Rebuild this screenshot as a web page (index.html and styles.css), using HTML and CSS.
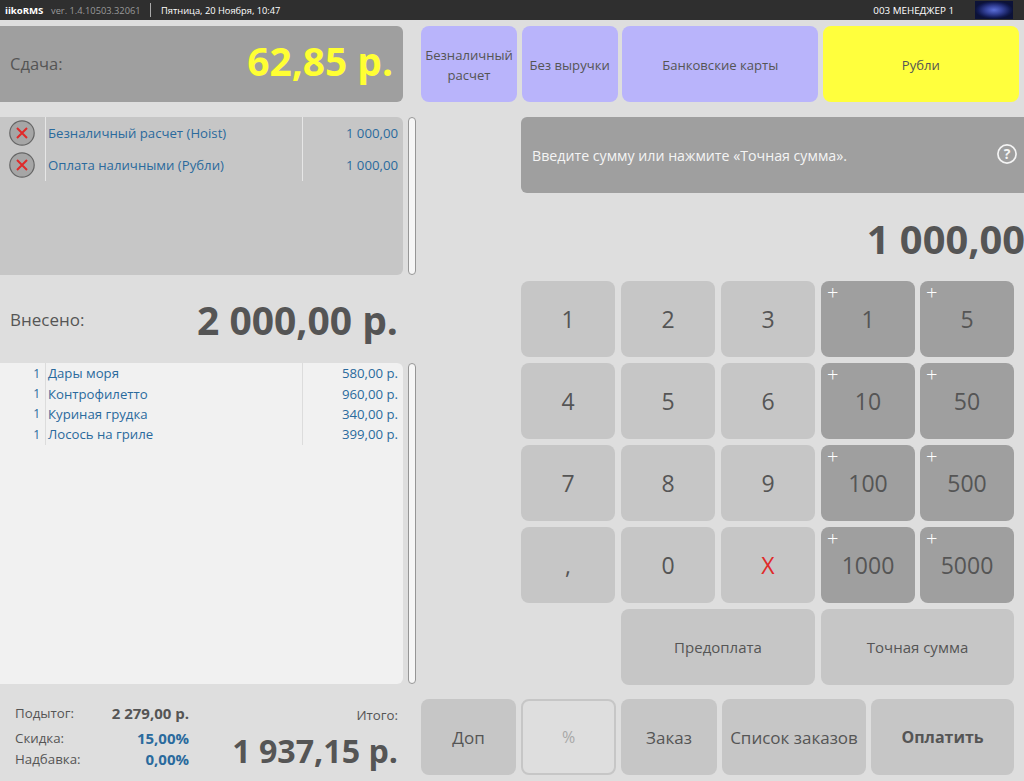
FILE: index.html
```html
<!DOCTYPE html>
<html lang="ru">
<head>
<meta charset="utf-8">
<title>iikoRMS</title>
<link rel="stylesheet" href="styles.css">
</head>
<body>
<header class="topbar">
  <span class="brand">iikoRMS</span>
  <span class="version">ver. 1.4.10503.32061</span>
  <span class="sep"></span>
  <span class="date">Пятница, 20 Ноября, 10:47</span>
  <span class="user">003 МЕНЕДЖЕР 1</span>
  <span class="logo"></span>
</header>
<main class="main">
  <section class="left">
    <div class="change">
      <span class="change-label">Сдача:</span>
      <span class="change-value">62,85 р.</span>
    </div>
    <div class="list-row paid-wrap">
      <div class="panel paid">
        <div class="line paid-line">
          <span class="cell-a"><svg class="del" viewBox="0 0 26 26"><circle cx="13" cy="13" r="12.2"/><path d="M8 8 18 18M18 8 8 18"/></svg></span>
          <span class="cell-b">Безналичный расчет (Hoist)</span>
          <span class="cell-c">1 000,00</span>
        </div>
        <div class="line paid-line">
          <span class="cell-a"><svg class="del" viewBox="0 0 26 26"><circle cx="13" cy="13" r="12.2"/><path d="M8 8 18 18M18 8 8 18"/></svg></span>
          <span class="cell-b">Оплата наличными (Рубли)</span>
          <span class="cell-c">1 000,00</span>
        </div>
      </div>
      <div class="scroll"></div>
    </div>
    <div class="paid-sum">
      <span class="paid-label">Внесено:</span>
      <span class="paid-value">2 000,00 р.</span>
    </div>
    <div class="list-row order-wrap">
      <div class="panel order">
        <div class="line order-line"><span class="cell-a qty">1</span><span class="cell-b">Дары моря</span><span class="cell-c">580,00 р.</span></div>
        <div class="line order-line"><span class="cell-a qty">1</span><span class="cell-b">Контрофилетто</span><span class="cell-c">960,00 р.</span></div>
        <div class="line order-line"><span class="cell-a qty">1</span><span class="cell-b">Куриная грудка</span><span class="cell-c">340,00 р.</span></div>
        <div class="line order-line"><span class="cell-a qty">1</span><span class="cell-b">Лосось на гриле</span><span class="cell-c">399,00 р.</span></div>
      </div>
      <div class="scroll"></div>
    </div>
    <div class="totals">
      <div class="totals-left">
        <div class="t-row t-sub"><span>Подытог:</span><b>2 279,00 р.</b></div>
        <div class="t-row t-disc"><span>Скидка:</span><b class="blue">15,00%</b></div>
        <div class="t-row"><span>Надбавка:</span><b class="blue">0,00%</b></div>
      </div>
      <div class="totals-right">
        <span class="total-label">Итого:</span>
        <span class="total-value">1 937,15 р.</span>
      </div>
    </div>
  </section>
  <section class="right">
    <div class="pay-types">
      <button class="btn lilac w96 small">Безналичный<br>расчет</button>
      <button class="btn lilac w96 small">Без выручки</button>
      <button class="btn lilac w196 small">Банковские карты</button>
      <button class="btn yellow w196 small">Рубли</button>
    </div>
    <div class="entry">
      <div class="hint">
        <span>Введите сумму или нажмите «Точная сумма».</span>
        <svg class="help" viewBox="0 0 20 20"><circle cx="10" cy="10" r="9.1"/><text x="10" y="15" text-anchor="middle">?</text></svg>
      </div>
      <div class="amount">1 000,00</div>
      <div class="keypad">
        <button class="btn key">1</button>
        <button class="btn key">2</button>
        <button class="btn key">3</button>
        <button class="btn key dark"><i class="plus">+</i>1</button>
        <button class="btn key dark"><i class="plus">+</i>5</button>
        <button class="btn key">4</button>
        <button class="btn key">5</button>
        <button class="btn key">6</button>
        <button class="btn key dark"><i class="plus">+</i>10</button>
        <button class="btn key dark"><i class="plus">+</i>50</button>
        <button class="btn key">7</button>
        <button class="btn key">8</button>
        <button class="btn key">9</button>
        <button class="btn key dark"><i class="plus">+</i>100</button>
        <button class="btn key dark"><i class="plus">+</i>500</button>
        <button class="btn key">,</button>
        <button class="btn key">0</button>
        <button class="btn key red">X</button>
        <button class="btn key dark"><i class="plus">+</i>1000</button>
        <button class="btn key dark"><i class="plus">+</i>5000</button>
        <button class="btn wide skip">Предоплата</button>
        <button class="btn wide">Точная сумма</button>
      </div>
    </div>
    <div class="actions">
      <button class="btn act w95">Доп</button>
      <button class="btn act w95 off">%</button>
      <button class="btn act w96b">Заказ</button>
      <button class="btn act w144">Список заказов</button>
      <button class="btn act w143 strong">Оплатить</button>
    </div>
  </section>
</main>
</body>
</html>
```
FILE: styles.css
```css
* { box-sizing: border-box; }
html, body { margin: 0; height: 100%; }
body {
  width: 1024px;
  height: 781px;
  overflow: hidden;
  background: #dedede;
  color: #555;
  font-family: "Open Sans", "Noto Sans", sans-serif;
}
.topbar {
  height: 20px;
  background: #2f2f2f;
  display: flex;
  align-items: center;
  font-size: 9.3px;
  color: #fff;
  padding-left: 5px;
}
.brand { font-weight: 700; width: 46px; font-size: 9.6px; }
.version { color: #999; width: 99px; }
.sep { width: 1px; height: 14px; background: #aaa; margin-right: 10px; }
.user { margin-left: auto; margin-right: 21px; font-size: 9.8px; }
.logo {
  width: 38px;
  height: 18px;
  margin-right: 11px;
  background: radial-gradient(ellipse 50% 50% at 50% 50%, #5b6fd8 0%, #34429a 45%, #111a52 85%, #0c1238 100%);
}
.main { display: flex; gap: 5px; padding-top: 6px; }
.left { width: 416px; display: flex; flex-direction: column; }
.change {
  width: 403px;
  height: 76px;
  margin-bottom: 15px;
  background: #9f9f9f;
  border-radius: 0 6px 6px 0;
  display: flex;
  justify-content: space-between;
  align-items: center;
  padding: 0 10px 5px;
}
.change-label { font-size: 16.5px; padding-top: 3px; }
.change-value { font-size: 38.9px; font-weight: 700; color: #ffff33; line-height: 1; }
.list-row { display: flex; gap: 5px; }
.paid-wrap { height: 158px; }
.order-wrap { height: 321px; }
.panel { width: 403px; border-radius: 0 6px 6px 0; }
.paid { background: #c6c6c6; }
.order { background: #f1f1f1; }
.scroll {
  width: 8px;
  background: #f6f6f6;
  border: 1px solid #969696;
  border-radius: 4px;
}
.line { display: flex; font-size: 13.2px; color: #2a6a9d; }
.paid-line { height: 32px; }
.order-line { height: 20.4px; }
.cell-a { width: 46px; border-right: 1px solid #e6e6e6; display: flex; align-items: center; justify-content: center; }
.cell-b { width: 257px; border-right: 1px solid #e6e6e6; padding-left: 2px; display: flex; align-items: center; }
.cell-c { flex: 1; padding-right: 5px; display: flex; align-items: center; justify-content: flex-end; }
.order .cell-a, .order .cell-b { border-right-color: #dcdcdc; }
.qty { justify-content: flex-end; padding-right: 5px; font-size: 12px; }
.del { width: 26px; height: 26px; margin-left: -1px; }
.del circle { fill: #a6a6a6; stroke: #666; stroke-width: 1.2; }
.del path { stroke: #e02a2a; stroke-width: 2; fill: none; }
.paid-sum {
  width: 403px;
  height: 88px;
  display: flex;
  justify-content: space-between;
  align-items: center;
  padding: 0 5px 0 10px;
}
.paid-label { font-size: 17px; }
.paid-value { font-size: 39px; font-weight: 700; line-height: 1; }
.totals {
  width: 403px;
  height: 97px;
  display: flex;
  justify-content: space-between;
  padding: 16px 5px 0 15px;
}
.totals-left { width: 174px; }
.t-row { display: flex; justify-content: space-between; font-size: 13.3px; height: 22px; align-items: center; }
.t-row b { font-size: 15px; }
.t-sub { height: 26px; }
.t-disc { height: 22px; padding-top: 1px; }
.blue { color: #2a6a9d; }
.totals-right { display: flex; flex-direction: column; align-items: flex-end; }
.total-label { font-size: 13.3px; line-height: 30px; }
.total-value { font-size: 32.2px; font-weight: 700; line-height: 40px; margin-top: 1px; }
.right { width: 603px; display: flex; flex-direction: column; }
.pay-types { display: flex; height: 76px; gap: 4.6px; margin-bottom: 15px; }
.btn {
  border: 0;
  padding: 0;
  margin: 0;
  font-family: inherit;
  color: #555;
  border-radius: 8px;
  background: #c6c6c6;
  position: relative;
}
.small { font-size: 13.1px; line-height: 20px; padding-top: 1px; }
.lilac { background: #b9b4fb; }
.yellow { background: #ffff3d; }
.w96 { width: 96px; }
.w196 { width: 196px; }
.entry { padding-left: 100px; }
.hint {
  height: 76px;
  background: #9f9f9f;
  color: #f4f4f4;
  font-size: 14.2px;
  border-radius: 6px 0 0 6px;
  display: flex;
  justify-content: space-between;
  align-items: center;
  padding: 0 7px 0 11px;
}
.help { width: 20px; height: 20px; margin-bottom: 2px; }
.help circle { fill: none; stroke: #f4f4f4; stroke-width: 1.7; }
.help text { fill: #f4f4f4; font-size: 14px; font-weight: 700; font-family: "Open Sans", sans-serif; }
.amount {
  height: 88px;
  font-size: 39.8px;
  font-weight: 700;
  line-height: 92px;
  text-align: right;
  white-space: nowrap;
  margin-right: -1px;
}
.keypad {
  display: grid;
  grid-template-columns: 100px 100px 100px 99px 94px;
  grid-auto-rows: 76px;
  row-gap: 6px;
}
.key { width: 94px; font-size: 23px; font-weight: 400; }
.dark { background: #9f9f9f; }
.red { color: #e02a2a; }
.plus {
  position: absolute;
  left: 6px;
  top: 0;
  font-style: normal;
  font-size: 20px;
  font-weight: 300;
  color: #fff;
  line-height: 24px;
}
.wide { width: 194px; font-size: 15px; }
.wide.skip { grid-column: 2 / span 2; }
.keypad > .wide:last-child { grid-column: 4 / span 2; width: 193px; }
.actions { display: flex; height: 76px; gap: 5px; margin-top: 14px; }
.act { font-size: 17px; }
.w95 { width: 95px; }
.w96b { width: 96px; }
.w144 { width: 144px; }
.w143 { width: 143px; }
.off { background: #dedede; border: 2px solid #c6c6c6; color: #a8a8a8; font-size: 16px; }
.strong { font-weight: 700; font-size: 16px; }
```
